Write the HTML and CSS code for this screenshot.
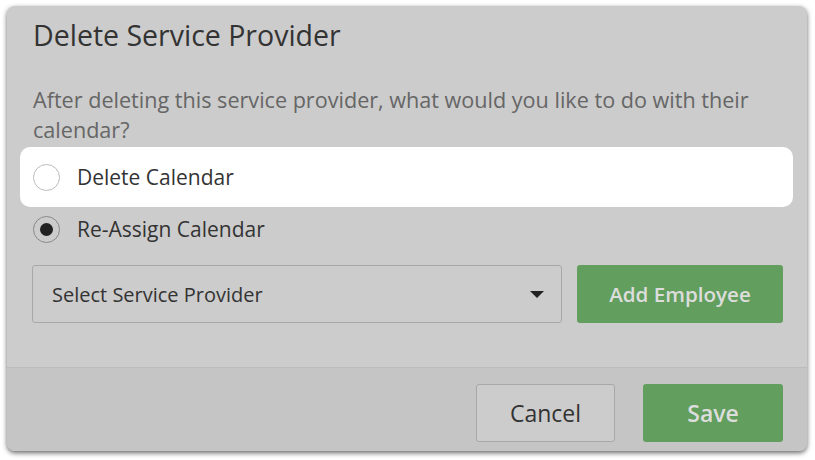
FILE: index.html
```html
<!DOCTYPE html>
<html lang="en">
<head>
    <meta charset="UTF-8">
    <meta name="viewport" content="width=device-width, initial-scale=1.0">
    <title>Delete Service Provider</title>
    <link rel="stylesheet" href="styles.css">
</head>
<body>

    <div class="modal">
        <div class="modal-body">
            <h2>Delete Service Provider</h2>
            <p class="question">After deleting this service provider, what would you like to do with their calendar?</p>

            <label class="option highlight">
                <span class="radio"></span>
                Delete Calendar
            </label>
            <label class="option">
                <span class="radio checked"></span>
                Re-Assign Calendar
            </label>

            <div class="assign-row">
                <div class="select">
                    <span>Select Service Provider</span>
                    <span class="caret"></span>
                </div>
                <button class="btn btn-green add">Add Employee</button>
            </div>
        </div>

        <!-- Footer -->
        <div class="modal-footer">
            <button class="btn btn-cancel">Cancel</button>
            <button class="btn btn-green save">Save</button>
        </div>
    </div>

</body>
</html>
```

FILE: styles.css
```css
* {
    margin: 0;
    padding: 0;
    box-sizing: border-box;
    font-family: "Open Sans", Arial, sans-serif;
}

body {
    background-color: #ffffff;
    padding: 6px 8px 9px 7px;
}

.modal {
    width: 800px;
    height: 445px;
    background: #cccccc;
    border-radius: 8px;
    box-shadow: 0 2px 5px rgba(0, 0, 0, 0.6);
    display: flex;
    flex-direction: column;
    overflow: hidden;
}

.modal-body {
    padding: 14px 14px 0 13px;
    height: 362px;
    border-bottom: 1px solid #bbbbbb;
}

h2 {
    font-size: 28.5px;
    font-weight: 400;
    color: #333333;
    margin-left: 13px;
    line-height: 31px;
}

.question {
    font-size: 21.6px;
    color: #666666;
    line-height: 30px;
    margin: 34px 0 0 13px;
}

.option {
    display: flex;
    align-items: center;
    gap: 17px;
    height: 60px;
    padding-left: 13px;
    font-size: 21px;
    color: #333333;
    border-radius: 10px;
}

.option.highlight {
    background: #ffffff;
    margin-top: 2px;
}

.option + .option {
    height: 44px;
}

.radio {
    width: 27px;
    height: 27px;
    border-radius: 50%;
    border: 1px solid #bbbbbb;
    background: #ffffff;
    display: flex;
    align-items: center;
    justify-content: center;
}

.radio.checked {
    background: #cccccc;
    border-color: #888888;
}

.radio.checked::after {
    content: "";
    width: 13px;
    height: 13px;
    border-radius: 50%;
    background: #222222;
}

.assign-row {
    display: flex;
    gap: 15px;
    margin: 14px 10px 0 12px;
}

.select {
    flex: 1;
    height: 58px;
    border: 1px solid #a8a8a8;
    border-radius: 3px;
    display: flex;
    align-items: center;
    justify-content: space-between;
    padding: 0 17px 0 19px;
    font-size: 20px;
    color: #333333;
}

.caret {
    width: 0;
    height: 0;
    border-left: 7px solid transparent;
    border-right: 7px solid transparent;
    border-top: 7px solid #222222;
}

.btn {
    height: 58px;
    border-radius: 3px;
    border: none;
    font-size: 20.6px;
    cursor: pointer;
}

.btn-green {
    background: #629f5e;
    color: #dddddd;
    font-weight: 600;
}

.add {
    width: 206px;
}

.modal-footer {
    flex: 1;
    background: #c5c5c5;
    display: flex;
    justify-content: flex-end;
    gap: 28px;
    padding: 16px 24px 0 0;
}

.btn-cancel {
    width: 139px;
    background: #cccccc;
    border: 1px solid #a8a8a8;
    color: #333333;
    font-weight: 400;
    font-size: 23px;
}

.save {
    width: 140px;
    font-size: 23px;
}
```
